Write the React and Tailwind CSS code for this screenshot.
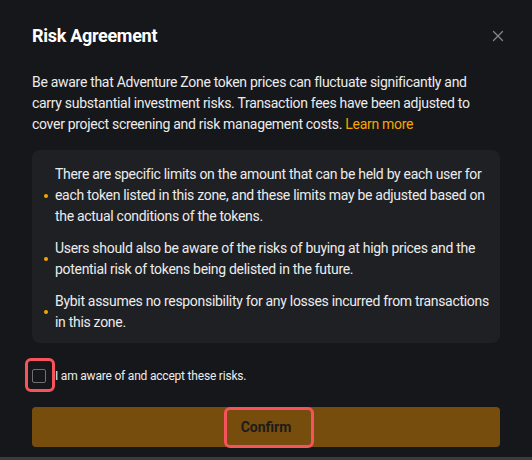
import React, { useState } from 'react';
import { X } from 'lucide-react';

const items = [
    'There are specific limits on the amount that can be held by each user for each token listed in this zone, and these limits may be adjusted based on the actual conditions of the tokens.',
    'Users should also be aware of the risks of buying at high prices and the potential risk of tokens being delisted in the future.',
    'Bybit assumes no responsibility for any losses incurred from transactions in this zone.',
];

const App = () => {
    const [checked, setChecked] = useState(false);

    return (
        <div className="w-[532px] h-[460px] bg-[#3a3b3f] overflow-hidden" style={{ fontFamily: 'Roboto, "Liberation Sans", sans-serif' }}>
            <div className="h-[457px] bg-[#16171b] px-8 pt-6 flex flex-col">
                {/* header */}
                <div className="flex items-center justify-between h-6">
                    <h2 className="text-[18px] font-bold text-white leading-6 tracking-[-0.3px]">Risk Agreement</h2>
                    <button className="text-[#85878c] mr-[-7px]">
                        <X size={18} strokeWidth={1.6} />
                    </button>
                </div>

                <p className="mt-6 pr-5 text-[14px] leading-[21px] text-[#ececec] tracking-[-0.3px]">
                    Be aware that Adventure Zone token prices can fluctuate significantly and carry substantial investment risks. Transaction fees have been adjusted to cover project screening and risk management costs.{' '}
                    <a className="text-[#f7a600]">Learn more</a>
                </p>

                <ul className="mt-[15px] bg-[#1f2024] rounded-lg pt-[14px] pb-[10px] pl-3 pr-[6px] flex flex-col gap-[11px]">
                    {items.map((t, i) => (
                        <li key={i} className="flex items-center">
                            <span className="w-[4px] h-[4px] rounded-full bg-[#f7a600] shrink-0 mr-[7px]" />
                            <span className="text-[14px] leading-[21px] text-[#ececec] tracking-[-0.3px]">{t}</span>
                        </li>
                    ))}
                </ul>

                <label className="mt-[23px] flex items-center cursor-pointer">
                    <span className="relative w-[14px] h-[14px] shrink-0">
                        <input
                            type="checkbox"
                            checked={checked}
                            onChange={() => setChecked(!checked)}
                            className="appearance-none w-[14px] h-[14px] border border-[#6e7076] rounded-[2px] block"
                        />
                        <span className="absolute left-[-7px] top-[-11px] w-[30px] h-[34px] border-[3px] border-[#f5545c] rounded-[6px] pointer-events-none" />
                    </span>
                    <span className="ml-[9px] text-[12px] text-[#ececec] leading-5 tracking-[-0.2px]">I am aware of and accept these risks.</span>
                </label>

                <div className="mt-[21px] relative">
                    <button className="w-full h-10 rounded-[4px] bg-[#774d0e] text-[#1c1c1c] font-bold text-[14px] flex items-center justify-center">
                        Confirm
                    </button>
                    <span className="absolute left-[192px] top-0 w-[90px] h-[41px] border-[3px] border-[#f5545c] rounded-[6px] pointer-events-none" />
                </div>
            </div>
        </div>
    );
};

export default App;
